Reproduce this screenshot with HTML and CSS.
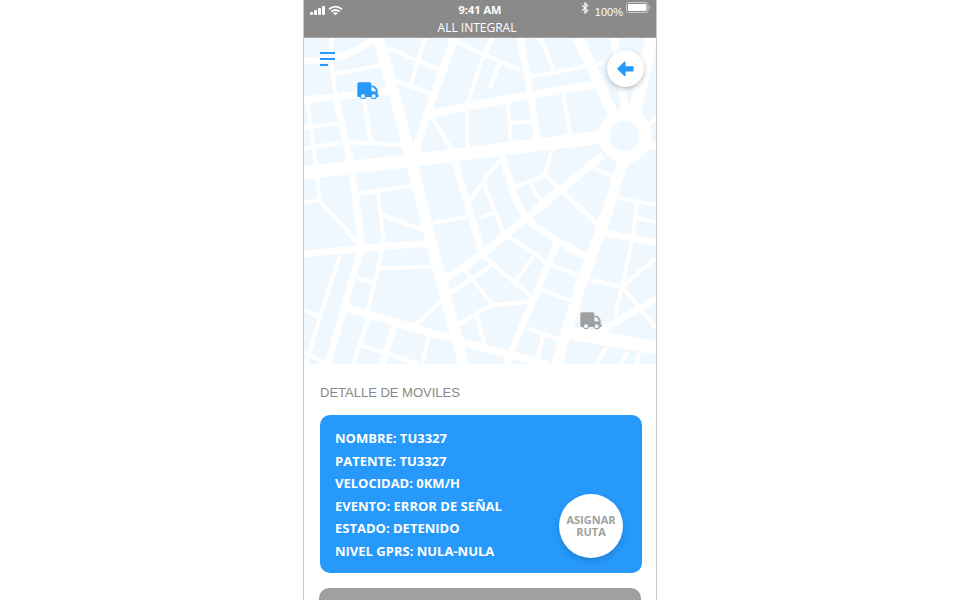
FILE: index.html
```html
<!DOCTYPE html>
<html lang="es">
<head>
<meta charset="utf-8">
<title>All Integral</title>
<link rel="stylesheet" href="styles.css">
</head>
<body>
<main class="phone">
  <header class="topbar">
    <div class="status">
      <div class="signal">
        <svg width="34" height="11" viewBox="0 0 34 11" aria-hidden="true">
          <g fill="#fff"><rect x="1" y="7" width="3" height="3" rx="1"/><rect x="5" y="5" width="3" height="5" rx="1"/><rect x="9" y="3" width="3" height="7" rx="1"/><rect x="13" y="1" width="3" height="9" rx="1"/></g>
          <g fill="none" stroke="#fff" stroke-width="1.8"><path d="M20 4.2Q26.500 -1 33 4.200"/><path d="M22.300 6.600Q26.500 3.400 30.700 6.600"/></g>
          <path d="M24 8Q26.500 6.400 29 8L26.500 10.300Z" fill="#fff"/>
        </svg>
      </div>
      <div class="clock">9:41 AM</div>
      <div class="power">
        <svg width="8" height="12" viewBox="0 0 8 12" aria-hidden="true"><path d="M1 3.200L6.600 8.400L4 11V1L6.600 3.600L1 8.800" fill="none" stroke="#fff" stroke-width="1.1"/></svg>
        <span class="percent">100%</span>
        <svg width="25" height="12" viewBox="0 0 25 12" aria-hidden="true"><rect x=".5" y=".5" width="21.500" height="10" rx="2" fill="none" stroke="#c8c8c8"/><rect x="2" y="2" width="18.500" height="7" rx="1" fill="#fff"/><path d="M23 3.800Q25 5.500 23 7.200Z" fill="#c8c8c8"/></svg>
      </div>
    </div>
    <h1 class="title">ALL INTEGRAL</h1>
  </header>

  <section class="map">
    <svg class="streets" viewBox="304 38 352 326" aria-hidden="true">
      <rect x="304" y="38" width="352" height="326" fill="#f0f8ff"/>
      <g fill="none" stroke="#fff" stroke-linejoin="round">
        <path stroke-width="4" d="M332 38L330 56L336 98M335 74L382 65M383 46L440 70M425 38L411 84M393 80L432 94M455 41L480 53L520 70M493 36L480 65L466 108M500 62L490 88M540 37L554 70M530 77L603 63M563 92L570 135M307 100L316 165M304 128L340 123M304 149L343 142L405 145M363 95L371 142M432 117L452 150M467 108V150M318 176L319 200L358 243M304 202L319 200M358 194L412 186M378 193L384 244M382 215L423 230M433 223L471 216M470 200L480 186L501 158M508 103L511 142M510 123L533 121M552 148L545 175L515 187M530 183L542 203M593 167L613 177M618 198L656 205M637 203L632 240L622 287L615 316M637 218L656 222M483 181L504 234M480 218L495 212M504 233L547 263L582 277M533 257L515 282M482 255L532 297M463 268L480 288L492 305L532 302M492 305L457 325M477 316L485 346M492 265L450 293L415 325M542 290L574 302M527 328L561 340M543 335L538 359M590 280L622 287L656 258M622 287L656 328M607 347L597 364M627 352L622 364M639 353L637 364M340 255L320 317L306 364M304 310L320 317M304 352L327 364M382 250L367 314M378 268L432 267M357 278L372 282M369 317L353 364M360 345L419 364M429 336L422 364M643 126L657 119"/>
        <path stroke-width="7" d="M304 61Q349 60 376 37M304 100L390 91M336 97L351 165L361 240V248L328 364M455 162L481 250M502 155L512 188Q519 213 536 226T588 258M304 254L366 248L430 243M557 243L510 355L506 364M603 233L657 243M656 299L600 331M395 325L382 364M520 37L529 85L538 142"/>
        <path stroke-width="5" d="M545 175L600 227"/>
        <path stroke-width="8" d="M430 114L480 104L598 84M603 155L481 255L444 280M346 308L480 347L548 365M455 37L431 102L414 156M644 143L657 147M614 37L626 115"/>
        <path stroke-width="11" d="M378 37L396 100L412 163L430 238L464 366M578 37L612 112M624 160L601 230L580 287L556 366"/>
        <path stroke-width="13" d="M303 173L415 160L480 152L602 137M570 333L657 348M652 37L634 115"/>
      </g>
      <circle cx="625" cy="136" r="21" fill="#f0f8ff" stroke="#fff" stroke-width="12"/>
    </svg>
    <button class="menu" type="button" aria-label="Menú">
      <svg width="16" height="14" viewBox="0 0 16 14" fill="#2699fb"><rect width="15" height="2"/><rect y="6" width="15" height="2"/><rect y="12" width="8" height="2"/></svg>
    </button>
    <button class="back" type="button" aria-label="Volver">
      <svg width="17" height="16" viewBox="0 0 17 16" fill="#2699fb"><path d="M0 7.800L7.400 .6L8.600 1V5.200H16.600V10.400H8.600V14.800L7.400 15.200Z"/></svg>
    </button>
    <svg class="truck truck-active" width="22" height="18" viewBox="0 0 66 54" role="img" aria-label="Móvil activo">
      <path fill="currentColor" fill-rule="evenodd" d="M6 1H38Q43 1 43 6V11H49Q52 11 54 13L61 22Q62 24 62 27V38H65V45H60A10 10 0 0 1 41 45H28A10 10 0 0 1 9 45H5Q1 45 1 41V6Q1 1 6 1ZM43 16V28H58L51 17Q50 16 48 16ZM18 37A6 6 0 1 0 18 49A6 6 0 1 0 18 37ZM50 37A6 6 0 1 0 50 49A6 6 0 1 0 50 37Z"/>
    </svg>
    <svg class="truck truck-idle" width="22" height="18" viewBox="0 0 66 54" role="img" aria-label="Móvil detenido">
      <path fill="currentColor" fill-rule="evenodd" d="M6 1H38Q43 1 43 6V11H49Q52 11 54 13L61 22Q62 24 62 27V38H65V45H60A10 10 0 0 1 41 45H28A10 10 0 0 1 9 45H5Q1 45 1 41V6Q1 1 6 1ZM43 16V28H58L51 17Q50 16 48 16ZM18 37A6 6 0 1 0 18 49A6 6 0 1 0 18 37ZM50 37A6 6 0 1 0 50 49A6 6 0 1 0 50 37Z"/>
    </svg>
  </section>

  <section class="details">
    <h2 class="heading">DETALLE DE MOVILES</h2>
    <article class="card">
      <ul class="facts">
        <li>NOMBRE: TU3327</li>
        <li>PATENTE: TU3327</li>
        <li>VELOCIDAD: 0KM/H</li>
        <li>EVENTO: ERROR DE SEÑAL</li>
        <li>ESTADO: DETENIDO</li>
        <li>NIVEL GPRS: NULA-NULA</li>
      </ul>
      <button class="assign" type="button">ASIGNAR RUTA</button>
    </article>
    <article class="card-idle"></article>
  </section>
</main>
</body>
</html>
```
FILE: styles.css
```css
* { box-sizing: border-box; }

body {
  margin: 0;
  background: #fff;
  font-family: "Open Sans", "Noto Sans", sans-serif;
}

button {
  border: 0;
  padding: 0;
  font: inherit;
  cursor: pointer;
}

.phone {
  display: flex;
  flex-direction: column;
  max-width: 354px;
  min-height: 100vh;
  margin: 0 auto;
  border: solid #c8c8c8;
  border-width: 0 1px;
}

.topbar {
  background: #8a8a8a;
  color: #fff;
  border-bottom: 1px solid #a4a4a4;
}

.status {
  display: grid;
  grid-template-columns: 1fr auto 1fr;
  align-items: center;
  height: 20px;
  padding: 0 5px 0 5px;
}

.signal,
.power { display: flex; }

.power {
  justify-content: flex-end;
  gap: 3px;
}

.percent {
  padding: 3px 0 0 3px;
  font: 11px/14px "Liberation Sans", sans-serif;
}

.clock {
  font-size: 11px;
  line-height: 20px;
  font-weight: 700;
}

.title {
  margin: 0;
  padding-right: 6px;
  font-size: 12px;
  line-height: 16px;
  padding-bottom: 1px;
  font-weight: 400;
  text-align: center;
}

.map { position: relative; }

.streets {
  display: block;
  width: 100%;
}

.menu,
.back,
.truck { position: absolute; }

.menu {
  display: flex;
  top: 14px;
  left: 16px;
  background: none;
}

.back {
  display: grid;
  place-items: center;
  top: 12px;
  right: 12px;
  width: 37px;
  height: 37px;
  border-radius: 50%;
  background: #fff;
  box-shadow: 0 2px 5px rgba(0, 0, 0, .25);
}

.truck-active {
  top: 44px;
  left: 53px;
  color: #2699fb;
}

.truck-idle {
  top: 274px;
  left: 276px;
  color: #9f9f9f;
}

.details {
  flex: 1;
  display: flex;
  flex-direction: column;
  padding: 20px 14px 0 16px;
}

.heading {
  margin: 0 0 14px;
  color: #888;
  font: 13px/17px "Liberation Sans", sans-serif;
}

.card {
  position: relative;
  margin-bottom: 15px;
  padding: 14px 15px 13px;
  border-radius: 10px;
  background: #2699fb;
}

.card-idle {
  flex: 1;
  margin: 0 1px 0 -1px;
  border-radius: 10px 10px 0 0;
  background: #a0a0a0;
}

.facts {
  display: flex;
  flex-direction: column;
  justify-content: space-between;
  min-height: 131px;
  margin: 0;
  padding: 0;
  list-style: none;
  color: #fff;
  font-size: 13px;
  line-height: 18px;
  font-weight: 700;
}

.assign {
  position: absolute;
  right: 19px;
  bottom: 15px;
  width: 64px;
  height: 64px;
  border-radius: 50%;
  background: #fff;
  box-shadow: 0 3px 6px rgba(0, 0, 0, .16);
  color: #a0a0a0;
  font-size: 11px;
  line-height: 12px;
  font-weight: 700;
}
```
